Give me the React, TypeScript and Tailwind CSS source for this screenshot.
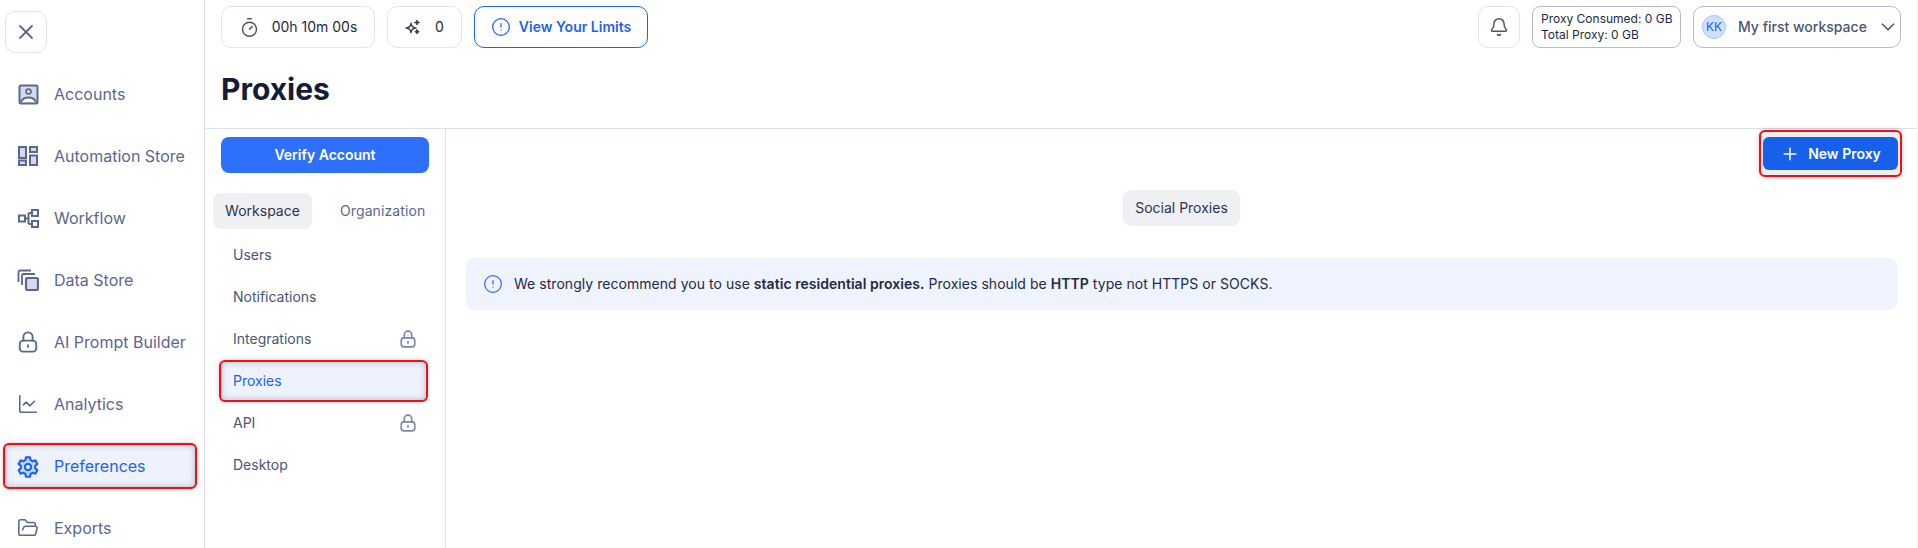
import {
  Bell,
  ChartLine,
  ChevronDown,
  CircleAlert,
  FolderOpen,
  Plus,
  Timer,
  X,
} from "lucide-react";
import type { ReactNode } from "react";

function AccountsIcon() {
  return (
    <svg width="21" height="21" viewBox="0 0 21 21" fill="none" stroke="currentColor" strokeWidth="2">
      <rect x="1.500" y="1.500" width="18" height="18" rx="1.500" fill="#d5daea" />
      <circle cx="10.500" cy="7.500" r="2.400" fill="#fff" strokeWidth="1.800" />
      <path d="M3 18c1.500-3.500 4.500-4.500 7.500-4.500S16.500 14.500 18 18" fill="#fff" strokeWidth="1.800" />
    </svg>
  );
}

function StoreIcon() {
  return (
    <svg width="20" height="20" viewBox="0 0 20 20" fill="#d5daea" stroke="currentColor" strokeWidth="2">
      <rect x="1" y="1" width="7" height="11" />
      <rect x="12" y="1" width="7" height="5" />
      <rect x="1" y="14.500" width="7" height="4.500" />
      <rect x="12" y="9.500" width="7" height="9.500" />
    </svg>
  );
}

function WorkflowIcon() {
  return (
    <svg width="21" height="19" viewBox="0 0 21 19" fill="#fff" stroke="currentColor" strokeWidth="2">
      <rect x="1" y="6.500" width="6" height="6" />
      <rect x="14" y="1" width="6" height="6" />
      <rect x="14" y="12" width="6" height="6" />
      <path d="M7 9.500h3.500M10.500 4v11M10.500 4H14M10.500 15H14" fill="none" />
    </svg>
  );
}

function DataStoreIcon() {
  return (
    <svg width="22" height="22" viewBox="0 0 22 22" fill="none" stroke="currentColor" strokeWidth="1.800">
      <path d="M1.500 13V3a1.500 1.500 0 0 1 1.500-1.500h11" />
      <path d="M5 16V6.500A1.500 1.500 0 0 1 6.500 5H18" />
      <rect x="9" y="9" width="12" height="12" rx="1.500" fill="#d5daea" strokeWidth="2.200" />
    </svg>
  );
}

function GearIcon() {
  return (
    <svg width="23" height="23" viewBox="0 0 24 24" fill="#c7d8fb" stroke="currentColor" strokeWidth="2.400" strokeLinejoin="round">
      <path d="M9.800 2h4.400l.6 3 2.300 1.300 2.900-1 2.200 3.800-2.300 2.100v2.800l2.300 2.100-2.200 3.800-2.900-1-2.300 1.300-.6 3H9.800l-.6-3-2.300-1.300-2.900 1-2.200-3.800 2.300-2.100v-2.800L1.800 9.100 4 5.300l2.900 1 2.300-1.300z" />
      <circle cx="12" cy="12.500" r="3.400" fill="#eef2fd" />
    </svg>
  );
}

function SparkIcon() {
  return (
    <svg width="16" height="16" viewBox="0 0 16 16" fill="#374151" stroke="#374151" strokeWidth="1">
      <path d="M6 4.500l1.300 3.200L10.500 9 7.300 10.300 6 13.500 4.700 10.300 1.500 9l3.200-1.300z" fill="#fff" strokeWidth="1.400" />
      <path d="M12 1l.7 1.800 1.800.7-1.800.7L12 6l-.7-1.800-1.800-.7 1.800-.7z" />
      <path d="M12 10.500l.7 1.500 1.500.7-1.500.7-.7 1.600-.7-1.600-1.500-.7 1.500-.7z" />
    </svg>
  );
}

function LockIcon({ size, width }: { size: number; width: number }) {
  return (
    <svg width={size} height={size} viewBox="0 0 24 24" fill="none" stroke="currentColor" strokeWidth={width} strokeLinecap="round">
      <rect x="3" y="10.500" width="18" height="12" rx="3.500" />
      <path d="M7 10.500V6.500a5 5 0 0 1 10 0v4" />
      <path d="M12 15.500v2" />
    </svg>
  );
}

const navItems: { label: string; icon: ReactNode; active?: boolean }[] = [
  { label: "Accounts", icon: <AccountsIcon /> },
  { label: "Automation Store", icon: <StoreIcon /> },
  { label: "Workflow", icon: <WorkflowIcon /> },
  { label: "Data Store", icon: <DataStoreIcon /> },
  { label: "AI Prompt Builder", icon: <LockIcon size={22} width={2} /> },
  { label: "Analytics", icon: <ChartLine className="h-6 w-6" strokeWidth={1.7} /> },
  { label: "Preferences", icon: <GearIcon />, active: true },
  { label: "Exports", icon: <FolderOpen className="h-6 w-6" strokeWidth={1.7} /> },
];

const settingsItems: { label: string; locked?: boolean; active?: boolean }[] = [
  { label: "Users" },
  { label: "Notifications" },
  { label: "Integrations", locked: true },
  { label: "Proxies", active: true },
  { label: "API", locked: true },
  { label: "Desktop" },
];

export default function App() {
  return (
    <div className="flex h-[548px] w-[1918px] overflow-hidden bg-white font-['Inter',sans-serif]">
      <aside className="h-full w-[205px] shrink-0 border-r border-[#dcdfee] pl-[5px]">
        <button
          className="mt-[11px] flex h-[42px] w-[42px] items-center justify-center rounded-[10px] border border-[#e2e4f0] text-[#5a6790]"
          type="button"
        >
          <X className="h-6 w-6" strokeWidth={1.8} />
        </button>
        <nav className="mt-[18px] flex w-[192px] flex-col gap-4">
          {navItems.map((item) => (
            <div
              key={item.label}
              className={
                item.active
                  ? "-ml-[2px] flex h-[46px] w-[194px] shrink-0 items-center rounded-[6px] border-2 border-[#f00f14] bg-[#eef2fd] pl-[12px] text-[#1d63ed] shadow-[inset_0_0_6px_rgba(80,90,130,0.4),0_0_5px_rgba(0,0,0,0.2)]"
                  : "flex h-[46px] shrink-0 items-center pl-[12px] text-[#5a6790]"
              }
            >
              <span className="flex w-[22px] justify-center">{item.icon}</span>
              <span className="ml-[15px] whitespace-nowrap text-base">{item.label}</span>
            </div>
          ))}
        </nav>
      </aside>

      <div className="flex min-w-0 flex-1 flex-col border-r border-[#f0f1f6]">
        <header className="h-[129px] shrink-0 border-b border-[#dcdfee] px-4 pt-[6px]">
          <div className="flex h-[42px] items-center">
            <div className="flex h-[42px] w-[154px] items-center justify-center gap-3 rounded-[10px] border border-[#e2e4f0] text-sm text-[#1f2937]">
              <Timer className="h-[21px] w-[21px] text-[#4b5563]" strokeWidth={1.7} />
              <span>00h 10m 00s</span>
            </div>
            <div className="ml-[12px] flex h-[42px] w-[75px] items-center justify-center gap-[14px] rounded-[10px] border border-[#e2e4f0] text-sm text-[#1f2937]">
              <SparkIcon />
              <span>0</span>
            </div>
            <div className="ml-[12px] flex h-[42px] w-[174px] items-center justify-center gap-2 rounded-[10px] border border-[#1d63ed] text-sm font-semibold text-[#1d63ed]">
              <CircleAlert className="h-[20px] w-[20px]" strokeWidth={1.5} />
              <span>View Your Limits</span>
            </div>
            <div className="ml-auto flex h-[42px] w-[42px] items-center justify-center rounded-[10px] border border-[#e2e4f0] text-[#4b5563]">
              <Bell className="h-5 w-5" strokeWidth={1.8} />
            </div>
            <div className="ml-[12px] flex h-[42px] w-[149px] flex-col justify-center rounded-[8px] border border-[#b4bcd6] pl-[8px] text-xs leading-4 text-[#1f2a44]">
              <span>Proxy Consumed: 0 GB</span>
              <span>Total Proxy: 0 GB</span>
            </div>
            <div className="ml-[12px] flex h-[42px] w-[208px] items-center rounded-[10px] border border-[#b4bcd6] pl-[8px] text-[#4b5574]">
              <span className="flex h-[24px] w-[24px] items-center justify-center rounded-full border border-[#a9c4fa] bg-[#cfe0fd] text-xs text-[#1d63ed]">
                KK
              </span>
              <span className="ml-[12px] whitespace-nowrap text-sm font-medium">My first workspace</span>
              <ChevronDown className="ml-[10px] h-[22px] w-[22px]" strokeWidth={1.8} />
            </div>
          </div>
          <h1 className="mt-[20px] text-[30px] font-bold leading-[42px] text-[#141c38]">Proxies</h1>
        </header>

        <div className="flex min-h-0 flex-1">
          <section className="w-[241px] shrink-0 border-r border-[#dcdfee] pt-2">
            <button
              className="ml-4 h-9 w-[208px] rounded-[8px] bg-[#2e6ffb] text-sm font-semibold text-white"
              type="button"
            >
              Verify Account
            </button>
            <div className="mt-5 flex items-center pl-2">
              <div className="flex h-9 w-[99px] items-center justify-center rounded-[8px] bg-[#eff0f4] text-sm text-[#2a3450]">
                Workspace
              </div>
              <div className="ml-[28px] text-sm tracking-[0.1px] text-[#5a6790]">Organization</div>
            </div>
            <ul className="mt-[5px] flex flex-col">
              {settingsItems.map((item) => (
                <li
                  key={item.label}
                  className={
                    item.active
                      ? "ml-[14px] flex h-[42px] w-[209px] items-center rounded-[6px] border-2 border-[#f00f14] bg-[#eef2fd] pl-[12px] text-sm text-[#1d63ed] shadow-[inset_0_0_6px_rgba(80,90,130,0.4),0_0_5px_rgba(0,0,0,0.2)]"
                      : "ml-[14px] flex h-[42px] w-[209px] items-center justify-between pl-[14px] pr-[11px] text-sm text-[#4b5574]"
                  }
                >
                  <span>{item.label}</span>
                  {item.locked && (
                    <span className="text-[#7c87ab]">
                      <LockIcon size={18} width={2.2} />
                    </span>
                  )}
                </li>
              ))}
            </ul>
          </section>

          <main className="min-w-0 flex-1 pl-5 pr-5 pt-2">
            <div className="flex justify-end">
              <div className="-my-[7px] -mr-[5px] flex rounded-[6px] border-2 border-[#f00f14] bg-[#eeeeee] px-[2px] py-[5px] shadow-[0_0_5px_rgba(0,0,0,0.25)]">
                <button
                  className="flex h-[33px] w-[135px] items-center justify-center gap-2 rounded-[6px] bg-[#1660ec] text-sm font-semibold text-white"
                  type="button"
                >
                  <Plus className="h-5 w-5" strokeWidth={1.8} />
                  New Proxy
                </button>
              </div>
            </div>
            <div className="mt-[20px] flex justify-center">
              <div className="flex h-9 w-[117px] items-center justify-center rounded-[8px] bg-[#eff0f4] text-sm text-[#2a3450]">
                Social Proxies
              </div>
            </div>
            <div className="mt-[32px] flex h-[52px] items-center gap-[11px] rounded-[8px] bg-[#eff3fd] pl-[17px] text-sm text-[#1f2a44]">
              <CircleAlert className="h-[20px] w-[20px] text-[#2e6ffb]" strokeWidth={1.5} />
              <span className="tracking-[0.04px]">
                We strongly recommend you to use <b className="font-semibold">static residential proxies.</b> Proxies
                should be <b className="font-semibold">HTTP</b> type not HTTPS or SOCKS.
              </span>
            </div>
          </main>
        </div>
      </div>
    </div>
  );
}
